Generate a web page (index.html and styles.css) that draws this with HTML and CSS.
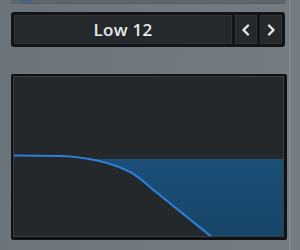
FILE: index.html
```html
<!DOCTYPE html>
<html lang="en">
<head>
  <meta charset="UTF-8" />
  <title>Filter</title>
  <link rel="stylesheet" href="styles.css">
</head>
<body>
  <div class="panel">
    <div class="top-strip"><span class="top-knob"></span></div>

    <div class="selector">
      <div class="cell name">Low 12</div>
      <div class="cell arrow">
        <svg width="10" height="12" viewBox="0 0 10 12"><polyline points="7,1.5 2.5,6 7,10.5" /></svg>
      </div>
      <div class="cell arrow">
        <svg width="10" height="12" viewBox="0 0 10 12"><polyline points="3,1.5 7.5,6 3,10.5" /></svg>
      </div>
    </div>

    <div class="graph">
      <div class="screen">
        <svg class="curve" width="269" height="159" viewBox="14 77 269 159">
          <defs>
            <linearGradient id="fillGrad" x1="0" y1="0" x2="0" y2="1">
              <stop offset="0" stop-color="#1d5783" />
              <stop offset="1" stop-color="#184568" />
            </linearGradient>
            <clipPath id="below">
              <rect x="14" y="159" width="269" height="80" />
            </clipPath>
          </defs>
          <path class="area" clip-path="url(#below)"
                d="M14 155.5 L60 156 C85 157 110 162 130 172 C140 177 148 185.8 156 192 L213 238 L284 238 L284 100 L14 100 Z" />
          <path class="line"
                d="M14 155.5 L60 156 C85 157 110 162 130 172 C140 177 148 185.8 156 192 L213 238" />
        </svg>
      </div>
    </div>
  </div>
</body>
</html>
```

FILE: styles.css
```css
body {
  margin: 0;
  width: 300px;
  height: 250px;
  overflow: hidden;
  font-family: "Open Sans", Arial, sans-serif;
  background: linear-gradient(100deg, #6c747b 0%, #727a81 60%, #757d84 100%);
}
.panel {
  width: 278px;
  height: 250px;
  padding-left: 11px;
  border-right: 2px solid #828a91;
}
.top-strip {
  width: 275px;
  height: 3px;
  background: #5f676e;
  border-bottom: 1px solid #575e65;
  border-radius: 0 0 3px 3px;
  position: relative;
}
.top-knob {
  position: absolute;
  left: 9px;
  top: 0;
  width: 12px;
  height: 2px;
  background: #44648c;
  border-radius: 0 0 2px 2px;
}
.selector {
  display: flex;
  gap: 3px;
  width: 268px;
  height: 29px;
  padding: 3px;
  margin-top: 8px;
  background: #121415;
  border-radius: 3px;
}
.cell {
  background: #25292c;
  box-shadow: inset 0 0 0 1px #2e3337;
  border-radius: 1px;
  display: flex;
  align-items: center;
  justify-content: center;
}
.name {
  width: 218px;
  color: #e6e8ea;
  font-size: 17px;
  font-weight: 600;
  letter-spacing: 0.3px;
}
.arrow {
  width: 22px;
}
.arrow polyline {
  fill: none;
  stroke: #e6e8ea;
  stroke-width: 2.4;
  stroke-linecap: round;
  stroke-linejoin: round;
}
.graph {
  width: 271px;
  height: 161px;
  margin-top: 27px;
  padding: 2px 3px 3px 2px;
  background: #101213;
  border-radius: 2px;
}
.screen {
  height: 159px;
  border: 1px solid #393e43;
  background: #24282b;
}
.curve {
  display: block;
}
.area {
  fill: url(#fillGrad);
}
.line {
  fill: none;
  stroke: #2b80d6;
  stroke-width: 2.2;
}
```
